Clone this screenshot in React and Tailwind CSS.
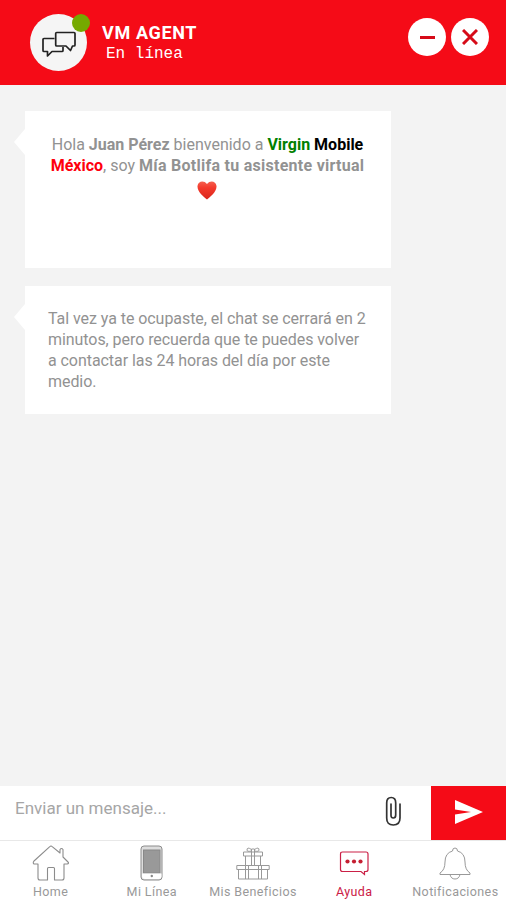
const ChatIcon = () => (
  <svg width="35" height="29" viewBox="0 0 35 29" fill="none" stroke="#222" strokeWidth="1.700" strokeLinejoin="round">
    <path d="M13.500 10.500H3Q2 10.500 2 11.500V22.500Q2 23.500 3 23.500H6.500V28L11 23.500H21Q22 23.500 22 22.500V19" />
    <path d="M15.700 4.500H33Q34 4.500 34 5.500V17Q34 18 33 18H31.500L29.500 22.500L25 18H15.700Q14.700 18 14.700 17V5.500Q14.700 4.500 15.700 4.500Z" />
  </svg>
);

const HomeIcon = () => (
  <svg width="38" height="36" viewBox="0 0 38 36" fill="none" stroke="#8c8c8c" strokeWidth="1.1" strokeLinejoin="round">
    <path d="M19 1Q18.300 1 17.500 1.800L2 16Q.5 18 2 19H6V33Q6 35 8 35H15.500V23.500Q15.500 22.500 16.500 22.500H21.500Q22.500 22.500 22.500 23.500V35H30Q32 35 32 33V19H35Q37.500 18.500 36 17L31 12V4.500Q29.500 2.500 28 4.500V8L20.500 1.800Q19.700 1 19 1Z" />
  </svg>
);

const PhoneIcon = () => (
  <svg width="24" height="36" viewBox="0 0 24 36" fill="none">
    <rect x="1" y="1" width="21" height="34" rx="3" fill="#ddd" stroke="#8c8c8c" />
    <rect x="3.500" y="5" width="16.500" height="23" fill="#999" stroke="#888" />
    <path d="M2 28.500H21.500V32Q21 34 19 34H5Q2 34 2 31Z" fill="#fff" />
    <circle cx="11.800" cy="31" r="1.200" fill="#888" />
  </svg>
);

const GiftIcon = () => (
  <svg width="34" height="34" viewBox="0 0 34 34" fill="none" stroke="#999" strokeWidth="1">
    <path d="M.8 19.500H33.200V23.500H.8ZM2.500 23.500V33H31.500V23.500M9.500 19.500V33M12.500 19.500V33M22.500 19.500V33M25.500 19.500V33" />
    <path d="M7.500 6H26.500V10H7.500ZM9.500 10V19.500M24.500 10V19.500M15.500 6V19.500M18.500 6V19.500" />
    <path d="M15.500 6V3H18.500V6M15.500 3.500Q11 .5 11 4Q11 6 15.500 5M18.500 3.500Q23 .5 23 4Q23 6 18.500 5" />
  </svg>
);

const HelpIcon = () => (
  <svg width="32" height="26" viewBox="0 0 32 26" fill="none" stroke="#cb2046" strokeWidth="1.200">
    <path d="M4.500 2H28Q30 2 30 4V19.500Q30 21.500 28 21.500H26.500V24.500L23 21.500H4.500Q2.500 21.500 2.500 19.500V4Q2.500 2 4.500 2Z" />
    <g fill="#c51f32" stroke="none">
      <circle cx="9.500" cy="11.500" r="2.100" />
      <circle cx="16" cy="11.500" r="2.100" />
      <circle cx="22.500" cy="11.500" r="2.100" />
    </g>
  </svg>
);

const BellIcon = () => (
  <svg width="32" height="33" viewBox="0 0 32 33" fill="none" stroke="#999" strokeWidth="1" strokeLinejoin="round">
    <path d="M13.500 4Q13.500 1 16 1T18.500 4Q26 6 26 15Q26 23 31 26V27.500H1V26Q6 23 6 15Q6 6 13.500 4ZM11 27.500Q12 32 16 32T21 27.500" />
  </svg>
);

const ClipIcon = () => (
  <svg width="17" height="30" viewBox="0 0 17 30" fill="none" stroke="#333" strokeWidth="1.700" strokeLinecap="round">
    <path d="M15 8V22Q15 29 8.300 29T1.700 22V7Q1.700 1.500 6.200 1.500T10.700 7V19Q10.700 22 8.300 22T6 19V8" />
  </svg>
);

const SendIcon = () => (
  <svg width="28" height="24" viewBox="0 0 28 24" fill="#fff">
    <path d="M0 0L28 12L0 24V14.500L16 12L0 9.500Z" />
  </svg>
);

const HeartIcon = () => (
  <svg className="mx-auto mt-[5px] -translate-x-px" width="20" height="19" viewBox="0 0 20 19">
    <defs>
      <linearGradient id="heart" x1="0" y1="0" x2="0" y2="1">
        <stop offset="0" stopColor="#f4604f" />
        <stop offset="0.350" stopColor="#f43a2c" />
        <stop offset="1" stopColor="#d9261c" />
      </linearGradient>
    </defs>
    <path d="M10 18.500C7 16 0 11 .5 5C1 0 7-1 10 3C13-1 19 0 19.500 5C20 11 13 16 10 18.500Z" fill="url(#heart)" />
  </svg>
);

const tabs = [
  { label: "Home", icon: <HomeIcon /> },
  { label: "Mi Línea", icon: <PhoneIcon /> },
  { label: "Mis Beneficios", icon: <GiftIcon /> },
  { label: "Ayuda", icon: <HelpIcon />, active: true },
  { label: "Notificaciones", icon: <BellIcon /> },
];

const Bubble = ({ className, children }) => (
  <div className={`relative w-[366px] bg-white ${className}`}>
    <span className="absolute top-[18px] -left-[11px] h-[26px] w-[11px] bg-white [clip-path:polygon(100%_0,100%_100%,0_50%)]"></span>
    {children}
  </div>
);

const App = () => {
  return (
    <div className="flex h-[900px] w-[506px] flex-col overflow-hidden bg-[#f3f3f3] font-['Roboto',sans-serif]">

      {/* Header */}
      <header className="flex h-[85px] shrink-0 items-start bg-[#f50b17]">
        <div className="relative mt-[14px] ml-[30px] flex size-[57px] items-center justify-center rounded-full bg-[#f5f5f5]">
          <ChatIcon />
          <span className="absolute top-0 -right-[3px] size-[18px] rounded-full bg-[#75a900]"></span>
        </div>
        <div className="mt-[22px] ml-[15px] text-white">
          <h1 className="text-[18px] leading-[22px] font-bold tracking-[0.65px]">VM AGENT</h1>
          <p className="ml-1 font-['Liberation_Mono',monospace] text-base leading-[21px]">En línea</p>
        </div>
        <div className="mt-[18px] mr-[17px] ml-auto flex gap-[5px]">
          <button aria-label="Minimizar" className="flex size-[38px] items-center justify-center rounded-full bg-white">
            <span className="h-[3px] w-[15px] bg-[#d60b18]"></span>
          </button>
          <button aria-label="Cerrar" className="flex size-[38px] items-center justify-center rounded-full bg-white">
            <svg width="16" height="16" viewBox="0 0 16 16" stroke="#d60b18" strokeWidth="3">
              <path d="M1 1L15 15M15 1L1 15" />
            </svg>
          </button>
        </div>
      </header>

      {/* Messages */}
      <main className="flex-1 pt-[26px] pl-[25px]">
        <Bubble className="h-[157px] pt-[23px] pr-px text-center text-base leading-[21px] text-[#929292]">
          <p className="whitespace-nowrap">
            Hola <b>Juan Pérez</b> bienvenido a <b className="text-[#008000]">Virgin</b> <b className="text-black">Mobile</b>
            <br />
            <b className="text-[#ff000c]">México</b>, soy <b className="tracking-[0.27px]">Mía Botlifa tu asistente virtual</b>
          </p>
          <HeartIcon />
        </Bubble>
        <Bubble className="mt-[18px] h-[128px] pt-[22px] pl-[23px] text-base leading-[21px] tracking-[-0.06px] text-[#929292]">
          <p className="whitespace-nowrap">
            Tal vez ya te ocupaste, el chat se cerrará en 2<br />
            minutos, pero recuerda que te puedes volver<br />
            a contactar las 24 horas del día por este<br />
            medio.
          </p>
        </Bubble>
      </main>

      {/* Message input */}
      <div className="flex h-[54px] shrink-0 bg-white">
        <p className="mt-[10px] ml-[15px] text-[17px] leading-[24px] text-[#a6a6a6]">Enviar un mensaje...</p>
        <button aria-label="Adjuntar" className="mt-[10px] mr-[29px] ml-auto self-start">
          <ClipIcon />
        </button>
        <button aria-label="Enviar" className="flex w-[75px] items-center justify-center bg-[#f50b17] pb-[2px]">
          <SendIcon />
        </button>
      </div>

      {/* Bottom navigation */}
      <nav className="grid h-[60px] shrink-0 grid-cols-5 border-t border-[#e8e8e8] bg-white">
        {tabs.map((tab) => (
          <div
            key={tab.label}
            className={`flex flex-col items-center whitespace-nowrap text-[12.500px] tracking-[0.4px] ${tab.active ? "text-[#cb2046]" : "text-[#999]"}`}
          >
            <span className="flex h-[44px] items-center">{tab.icon}</span>
            <span className="leading-[14px]">{tab.label}</span>
          </div>
        ))}
      </nav>

    </div>
  );
};

export default App;
